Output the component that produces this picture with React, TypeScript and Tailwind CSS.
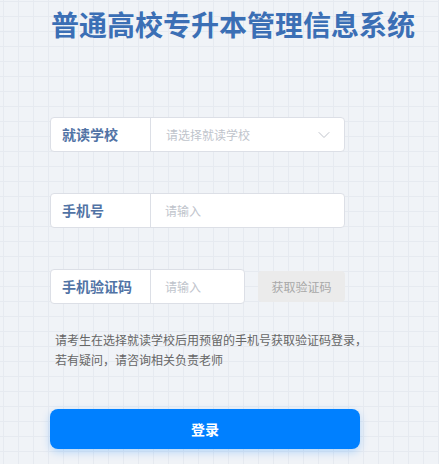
import { ChevronDown } from "lucide-react"

const fontCls = "font-['Noto_Sans_CJK_SC','Noto_Sans',sans-serif]"

function FieldLabel({ text }: { text: string }) {
  return (
    <div className="w-[100px] shrink-0 flex items-center pl-[11px] border-r border-[#dcdfe6] text-[14px] font-bold text-[#5173a5]">
      {text}
    </div>
  )
}

export default function App() {
  return (
    <div
      className={`${fontCls} w-[439px] h-[464px] overflow-hidden bg-[#f0f3f7] bg-[linear-gradient(#e6eaf0_1px,transparent_1px),linear-gradient(90deg,#e6eaf0_1px,transparent_1px)] bg-[size:15px_15px] bg-[position:3px_1px] pl-[50px]`}
    >
      <h1 className="pt-[4px] pl-[1px] text-[28px] leading-[40px] font-bold text-[#3b6fb5] whitespace-nowrap">
        普通高校专升本管理信息系统
      </h1>

      <div className="mt-[73px] flex flex-col">
        <div className="w-[295px] h-[35px] flex bg-white border border-[#dcdfe6] rounded-[4px]">
          <FieldLabel text="就读学校" />
          <div className="flex-1 flex items-center justify-between pl-[15px] pr-[10px] text-[12px] text-[#c0c4cc]">
            <span>请选择就读学校</span>
            <ChevronDown size={20} strokeWidth={1.2} className="text-[#c0c4cc]" />
          </div>
        </div>

        <div className="mt-[41px] w-[295px] h-[35px] flex bg-white border border-[#dcdfe6] rounded-[4px]">
          <FieldLabel text="手机号" />
          <div className="flex-1 flex items-center pl-[14px] text-[12px] text-[#c0c4cc]">
            请输入
          </div>
        </div>

        <div className="mt-[41px] flex items-center">
          <div className="w-[195px] h-[35px] flex bg-white border border-[#dcdfe6] rounded-[4px]">
            <FieldLabel text="手机验证码" />
            <div className="flex-1 flex items-center pl-[14px] text-[12px] text-[#c0c4cc]">
              请输入
            </div>
          </div>
          <button className="ml-[13px] w-[87px] h-[31px] rounded-[4px] bg-[#ebebeb] text-[12px] text-[#a8a8a8]">
            获取验证码
          </button>
        </div>

        <p className="mt-[26px] pl-[5px] text-[12px] leading-[20px] text-[#666666]">
          请考生在选择就读学校后用预留的手机号获取验证码登录，
          <br />
          若有疑问，请咨询相关负责老师
        </p>

        <button className="mt-[39px] w-[310px] h-[40px] rounded-[8px] bg-[#0080ff] text-white text-[14px] font-bold shadow-[0_3px_8px_rgba(0,128,255,0.25)]">
          登录
        </button>
      </div>
    </div>
  )
}
